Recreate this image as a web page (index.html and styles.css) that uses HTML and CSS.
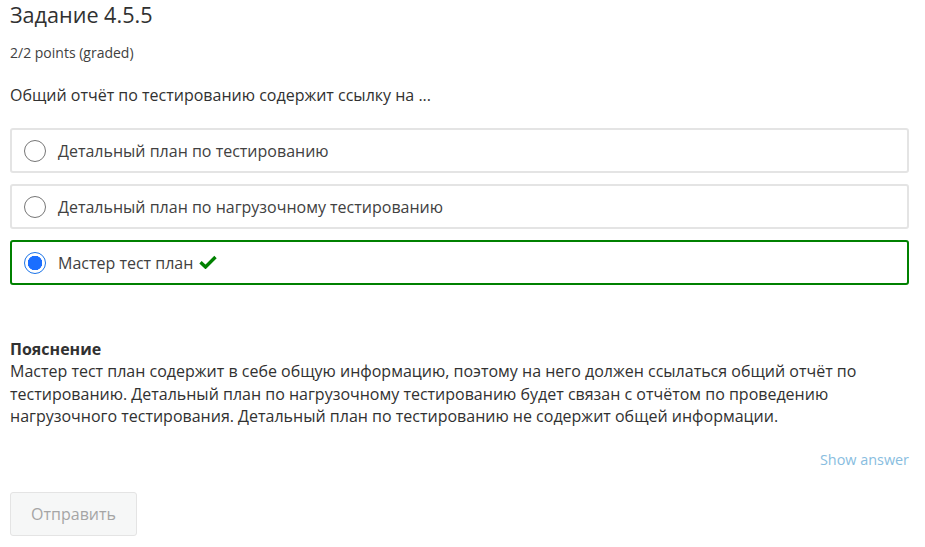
FILE: index.html
```html
<!DOCTYPE html>
<html lang="ru">
<head>
<meta charset="utf-8">
<link rel="stylesheet" href="styles.css">
</head>
<body>
<div class="problem">
  <h3 class="title">Задание 4.5.5</h3>
  <div class="points">2/2 points (graded)</div>
  <p class="question">Общий отчёт по тестированию содержит ссылку на ...</p>
  <div class="choices">
    <label class="choice">
      <span class="radio"></span>
      <span class="label-text">Детальный план по тестированию</span>
    </label>
    <label class="choice">
      <span class="radio"></span>
      <span class="label-text">Детальный план по нагрузочному тестированию</span>
    </label>
    <label class="choice correct">
      <span class="radio checked"></span>
      <span class="label-text">Мастер тест план</span>
      <svg class="check" width="18" height="14" viewBox="0 0 18 14"><path d="M1.5 7.2 L6.5 12 L16.5 2" fill="none" stroke="#008100" stroke-width="3.4" stroke-linejoin="miter"/></svg>
    </label>
  </div>
  <div class="explanation">
    <div class="exp-title">Пояснение</div>
    <p class="exp-text">Мастер тест план содержит в себе общую информацию, поэтому на него должен ссылаться общий отчёт по тестированию. Детальный план по нагрузочному тестированию будет связан с отчётом по проведению нагрузочного тестирования. Детальный план по тестированию не содержит общей информации.</p>
  </div>
  <div class="actions">
    <a class="show-answer">Show answer</a>
  </div>
  <button class="submit" disabled>Отправить</button>
</div>
</body>
</html>
```
FILE: styles.css
```css
html, body {
  margin: 0;
  padding: 0;
  background: #fff;
}
body {
  font-family: "Open Sans", "Noto Sans", sans-serif;
  color: #313131;
}
.problem {
  padding: 0 16px 0 10px;
}
.title {
  margin: 0;
  padding-top: 1px;
  font-size: 21.6px;
  font-weight: 400;
  line-height: 28px;
  color: #313131;
}
.points {
  margin-top: 14px;
  font-size: 14px;
  line-height: 20px;
  color: #414141;
}
.question {
  margin: 21px 0 0;
  font-size: 16px;
  line-height: 22px;
}
.choices {
  margin-top: 22px;
  display: flex;
  flex-direction: column;
  gap: 11px;
}
.choice {
  display: flex;
  align-items: center;
  height: 45px;
  box-sizing: border-box;
  border: 2px solid #e4e4e4;
  border-radius: 3px;
  padding: 0 12px;
}
.choice.correct {
  border-color: #008100;
}
.radio {
  width: 22px;
  height: 22px;
  border: 1px solid #767676;
  border-radius: 50%;
  box-sizing: border-box;
  flex: none;
  margin-right: 12px;
  background: #fff;
}
.radio.checked {
  border: 1px solid #1a73e8;
  background: radial-gradient(circle, #1a6eff 0 7px, #fff 7.5px);
}
.label-text {
  font-size: 16px;
  color: #414141;
}
.check {
  margin-left: 6px;
  margin-top: -2px;
}
.explanation {
  margin-top: 53px;
}
.exp-title {
  font-size: 16px;
  font-weight: 700;
  line-height: 22px;
}
.exp-text {
  margin: 0;
  font-size: 16px;
  line-height: 22.5px;
}
.actions {
  margin-top: 22px;
  display: flex;
  justify-content: flex-end;
}
.show-answer {
  font-size: 14.4px;
  color: #88bde0;
  line-height: 20px;
}
.submit {
  margin-top: 22px;
  font-family: "Open Sans", sans-serif;
  font-size: 16px;
  color: #a5a5a5;
  background: #f6f7f7;
  border: 1px solid #e4e4e4;
  border-radius: 3px;
  width: 127px;
  height: 44px;
  padding: 0;
}
```
